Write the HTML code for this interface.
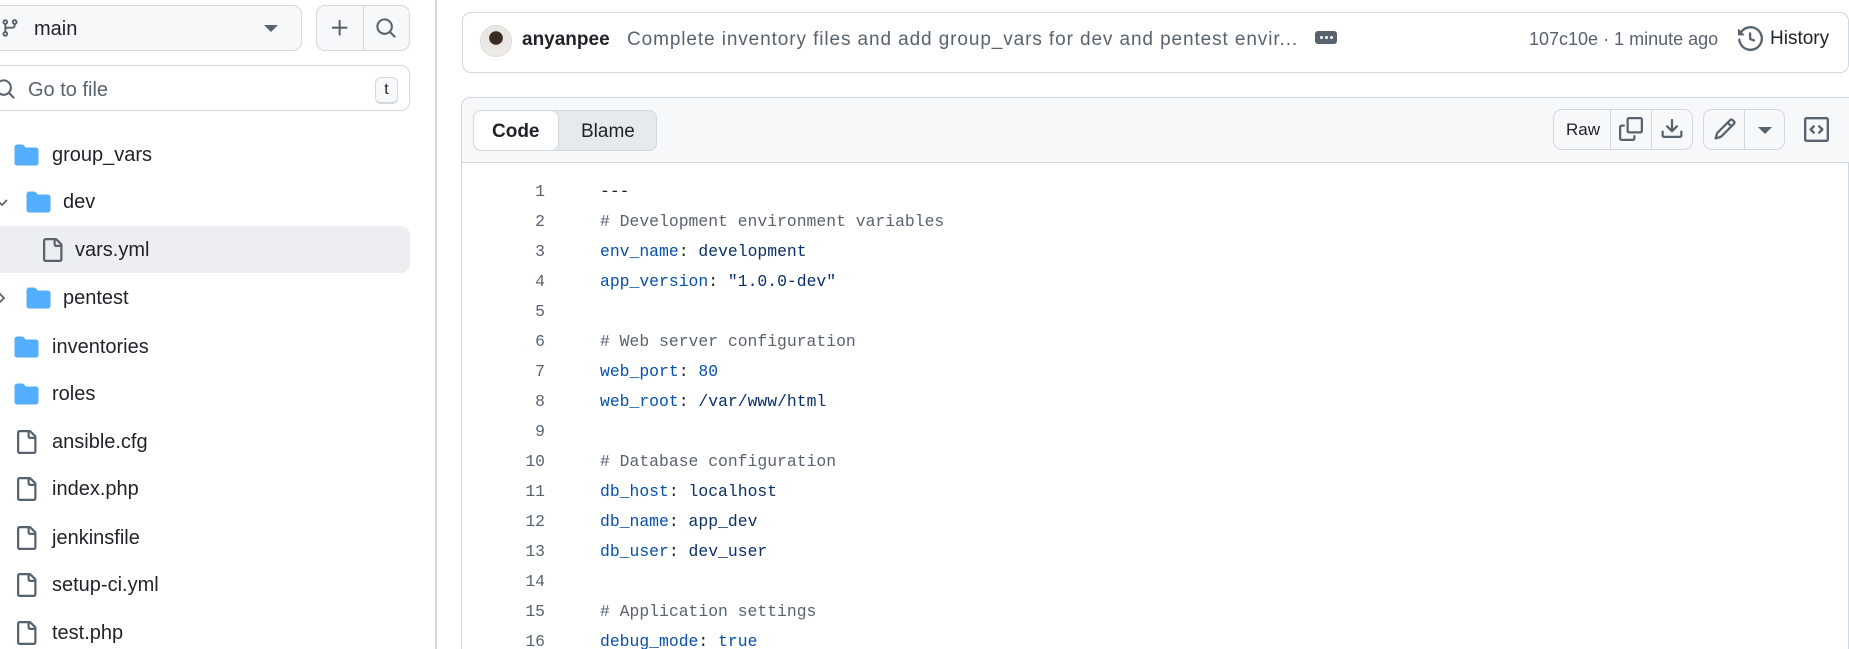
<!DOCTYPE html>
<html><head><meta charset="utf-8">
<style>
*{box-sizing:border-box;margin:0;padding:0}
html{width:1849px;height:649px;overflow:hidden}
body{width:1849px;height:649px;overflow:hidden;background:#fff;font-family:"Liberation Sans",sans-serif;color:#1f2328;position:relative}
.a{position:absolute}
.btn{position:absolute;border:1px solid #d1d9e0;border-radius:9px;background:#f6f8fa}
.ln{position:absolute;width:60px;left:485px;text-align:right;font-family:"Liberation Mono",monospace;font-size:16.4px;color:#59636e}
.cd{position:absolute;left:600px;font-family:"Liberation Mono",monospace;font-size:16.4px;color:#1f2328;white-space:pre}
.k{color:#0550ae}.v{color:#0a3069}.c{color:#59636e}
.t{position:absolute;font-size:20px}
</style></head><body>

<div class="btn" style="left:-10px;top:5px;width:312px;height:46px"></div>
<svg class="a" style="left:0;top:17px" width="20" height="22" viewBox="0 0 16 16"><path fill="#59636e" d="M9.5 3.25a2.25 2.25 0 1 1 3 2.122V6A2.5 2.5 0 0 1 10 8.5H6a1 1 0 0 0-1 1v1.128a2.251 2.251 0 1 1-1.5 0V5.372a2.25 2.25 0 1 1 1.5 0v1.836A2.5 2.5 0 0 1 6 7h4a1 1 0 0 0 1-1v-.628A2.25 2.25 0 0 1 9.5 3.25Zm-6 0a.75.75 0 1 0 1.5 0 .75.75 0 0 0-1.5 0Zm8.25-.75a.75.75 0 1 0 0 1.5.75.75 0 0 0 0-1.5ZM4.25 12a.75.75 0 1 0 0 1.5.75.75 0 0 0 0-1.5Z"/></svg>
<div class="t" style="left:34px;top:18px">main</div>
<svg class="a" style="left:264px;top:25px" width="14" height="8"><path d="M0 0h14L7 7z" fill="#59636e"/></svg>
<div class="btn" style="left:316px;top:5px;width:94px;height:46px"></div>
<div class="a" style="left:363px;top:6px;width:1px;height:44px;background:#d1d9e0"></div>
<svg class="a" style="left:329px;top:17px" width="22" height="22" viewBox="0 0 16 16"><path fill="#59636e" d="M7.75 2a.75.75 0 0 1 .75.75V7h4.25a.75.75 0 0 1 0 1.5H8.5v4.25a.75.75 0 0 1-1.5 0V8.5H2.75a.75.75 0 0 1 0-1.5H7V2.75A.75.75 0 0 1 7.75 2Z"/></svg>
<svg class="a" style="left:375px;top:17px" width="22" height="22" viewBox="0 0 16 16"><path fill="#59636e" d="M10.68 11.74a6 6 0 0 1-7.922-8.982 6 6 0 0 1 8.982 7.922l3.04 3.04a.749.749 0 0 1-.326 1.275.749.749 0 0 1-.734-.215ZM11.5 7a4.499 4.499 0 1 0-8.997 0A4.499 4.499 0 0 0 11.5 7Z"/></svg>

<div class="a" style="left:-10px;top:65px;width:420px;height:46px;border:1px solid #d1d9e0;border-radius:9px"></div>
<svg class="a" style="left:-6px;top:78px" width="22" height="22" viewBox="0 0 16 16"><path fill="#59636e" d="M10.68 11.74a6 6 0 0 1-7.922-8.982 6 6 0 0 1 8.982 7.922l3.04 3.04a.749.749 0 0 1-.326 1.275.749.749 0 0 1-.734-.215ZM11.5 7a4.499 4.499 0 1 0-8.997 0A4.499 4.499 0 0 0 11.5 7Z"/></svg>
<div class="t" style="left:28px;top:79px;color:#59636e">Go to file</div>
<div class="a" style="left:375px;top:77px;width:23px;height:27px;border:1px solid #d1d9e0;border-bottom-width:2px;border-radius:6px;font-size:16px;text-align:center;line-height:23px;background:#f6f8fa">t</div>

<div class="a" style="left:0;top:226px;width:410px;height:47px;background:#eceef1;border-radius:0 9px 9px 0"></div>

<svg width="0" height="0" style="position:absolute"><defs>
<symbol id="fold" viewBox="0 0 16 16"><path fill="#54aeff" d="M1.75 1A1.75 1.75 0 0 0 0 2.75v10.5C0 14.216.784 15 1.75 15h12.5A1.75 1.75 0 0 0 16 13.25v-8.5A1.75 1.75 0 0 0 14.25 3H7.5a.25.25 0 0 1-.2-.1l-.9-1.2C6.07 1.26 5.55 1 5 1H1.75Z"/></symbol>
<symbol id="file" viewBox="0 0 16 16"><path fill="#59636e" d="M2 1.75C2 .784 2.784 0 3.75 0h6.586c.464 0 .909.184 1.237.513l2.914 2.914c.329.328.513.773.513 1.237v9.586A1.75 1.75 0 0 1 13.25 16h-9.5A1.75 1.75 0 0 1 2 14.25Zm1.75-.25a.25.25 0 0 0-.25.25v12.5c0 .138.112.25.25.25h9.5a.25.25 0 0 0 .25-.25V6h-2.75A1.75 1.75 0 0 1 9 4.25V1.5Zm6.75.062V4.25c0 .138.112.25.25.25h2.688l-.011-.013-2.914-2.914-.013-.011Z"/></symbol>
</defs></svg>

<svg class="a" style="left:14px;top:143px" width="25" height="24"><use href="#fold"/></svg>
<div class="t" style="left:52px;top:144px">group_vars</div>
<svg class="a" style="left:-4px;top:196px" width="12" height="12" viewBox="0 0 12 12"><path d="M1 4l5 5 5-5" stroke="#59636e" stroke-width="1.8" fill="none"/></svg>
<svg class="a" style="left:26px;top:190px" width="25" height="24"><use href="#fold"/></svg>
<div class="t" style="left:63px;top:191px">dev</div>
<svg class="a" style="left:40px;top:238px" width="24" height="24"><use href="#file"/></svg>
<div class="t" style="left:75px;top:239px">vars.yml</div>
<svg class="a" style="left:-4px;top:292px" width="12" height="12" viewBox="0 0 12 12"><path d="M3 1l5 5-5 5" stroke="#59636e" stroke-width="1.8" fill="none"/></svg>
<svg class="a" style="left:26px;top:286px" width="25" height="24"><use href="#fold"/></svg>
<div class="t" style="left:63px;top:287px">pentest</div>
<svg class="a" style="left:14px;top:335px" width="25" height="24"><use href="#fold"/></svg>
<div class="t" style="left:52px;top:336px">inventories</div>
<svg class="a" style="left:14px;top:382px" width="25" height="24"><use href="#fold"/></svg>
<div class="t" style="left:52px;top:383px">roles</div>
<svg class="a" style="left:14px;top:430px" width="24" height="24"><use href="#file"/></svg>
<div class="t" style="left:52px;top:431px">ansible.cfg</div>
<svg class="a" style="left:14px;top:477px" width="24" height="24"><use href="#file"/></svg>
<div class="t" style="left:52px;top:478px">index.php</div>
<svg class="a" style="left:14px;top:526px" width="24" height="24"><use href="#file"/></svg>
<div class="t" style="left:52px;top:527px">jenkinsfile</div>
<svg class="a" style="left:14px;top:573px" width="24" height="24"><use href="#file"/></svg>
<div class="t" style="left:52px;top:574px">setup-ci.yml</div>
<svg class="a" style="left:14px;top:621px" width="24" height="24"><use href="#file"/></svg>
<div class="t" style="left:52px;top:622px">test.php</div>

<div class="a" style="left:435px;top:0;width:2px;height:649px;background:#d1d9e0"></div>

<div class="a" style="left:462px;top:12px;width:1387px;height:61px;border:1px solid #d1d9e0;border-radius:9px"></div>
<div class="a" style="left:480px;top:25px;width:32px;height:32px;border-radius:50%;background:radial-gradient(circle at 50% 40%,#3a2a22 0 28%,#e8e4e0 30%,#f2f0ee 100%);border:1px solid #ddd"></div>
<div class="a" style="left:522px;top:29px;font-size:19px;font-weight:bold">anyanpee</div>
<div class="a" style="left:627px;top:29px;font-size:19px;color:#59636e;white-space:nowrap;letter-spacing:0.9px">Complete inventory files and add group_vars for dev and pentest envir...</div>
<div class="a" style="left:1315px;top:31px;width:22px;height:13px;background:#59636e;border-radius:3px"></div>
<div class="a" style="left:1320px;top:36px;width:3px;height:3px;background:#fff;border-radius:50%"></div>
<div class="a" style="left:1325px;top:36px;width:3px;height:3px;background:#fff;border-radius:50%"></div>
<div class="a" style="left:1330px;top:36px;width:3px;height:3px;background:#fff;border-radius:50%"></div>
<div class="a" style="left:1529px;top:29px;font-size:18px;color:#59636e;white-space:nowrap">107c10e · 1 minute ago</div>
<svg class="a" style="left:1738px;top:26px" width="25" height="25" viewBox="0 0 16 16"><path fill="#59636e" d="m.427 1.927 1.215 1.215a8.002 8.002 0 1 1-1.6 5.685.75.75 0 1 1 1.493-.154 6.5 6.5 0 1 0 1.18-4.458l1.358 1.358A.25.25 0 0 1 3.896 6H.25A.25.25 0 0 1 0 5.75V2.104a.25.25 0 0 1 .427-.177ZM7.75 4a.75.75 0 0 1 .75.75v2.992l2.028.812a.75.75 0 0 1-.557 1.392l-2.5-1A.751.751 0 0 1 7 8.25v-3.5A.75.75 0 0 1 7.75 4Z"/></svg>
<div class="a" style="left:1770px;top:28px;font-size:19px">History</div>

<div class="a" style="left:461px;top:97px;width:1388px;height:552px;border:1px solid #d1d9e0;border-bottom:none;border-radius:9px 0 0 0"></div>
<div class="a" style="left:462px;top:98px;width:1387px;height:65px;background:#f6f8fa;border-bottom:1px solid #d1d9e0;border-radius:9px 0 0 0"></div>
<div class="a" style="left:473px;top:110px;width:184px;height:41px;background:#e6eaef;border:1px solid #d1d9e0;border-radius:8px"></div>
<div class="a" style="left:473px;top:110px;width:86px;height:41px;background:#fff;border:1px solid #d1d9e0;border-radius:8px"></div>
<div class="a" style="left:492px;top:121px;font-size:19px;font-weight:bold">Code</div>
<div class="a" style="left:581px;top:121px;font-size:19px">Blame</div>

<div class="btn" style="left:1553px;top:109px;width:140px;height:41px"></div>
<div class="a" style="left:1610px;top:110px;width:1px;height:39px;background:#d1d9e0"></div>
<div class="a" style="left:1651px;top:110px;width:1px;height:39px;background:#d1d9e0"></div>
<div class="a" style="left:1566px;top:120px;font-size:17px">Raw</div>
<svg class="a" style="left:1619px;top:117px" width="24" height="24" viewBox="0 0 16 16"><path fill="#59636e" d="M0 6.75C0 5.784.784 5 1.75 5h1.5a.75.75 0 0 1 0 1.5h-1.5a.25.25 0 0 0-.25.25v7.5c0 .138.112.25.25.25h7.5a.25.25 0 0 0 .25-.25v-1.5a.75.75 0 0 1 1.5 0v1.5A1.75 1.75 0 0 1 9.25 16h-7.5A1.75 1.75 0 0 1 0 14.25Z"/><path fill="#59636e" d="M5 1.75C5 .784 5.784 0 6.75 0h7.5C15.216 0 16 .784 16 1.75v7.5A1.75 1.75 0 0 1 14.25 11h-7.5A1.75 1.75 0 0 1 5 9.25Zm1.75-.25a.25.25 0 0 0-.25.25v7.5c0 .138.112.25.25.25h7.5a.25.25 0 0 0 .25-.25v-7.5a.25.25 0 0 0-.25-.25Z"/></svg>
<svg class="a" style="left:1660px;top:117px" width="24" height="24" viewBox="0 0 16 16"><path fill="#59636e" d="M2.75 14A1.75 1.75 0 0 1 1 12.25v-2.5a.75.75 0 0 1 1.5 0v2.5c0 .138.112.25.25.25h10.5a.25.25 0 0 0 .25-.25v-2.5a.75.75 0 0 1 1.5 0v2.5A1.75 1.75 0 0 1 13.25 14Z"/><path fill="#59636e" d="M7.25 7.689V2a.75.75 0 0 1 1.5 0v5.689l1.97-1.969a.749.749 0 1 1 1.06 1.06l-3.25 3.25a.749.749 0 0 1-1.06 0L4.22 6.78a.749.749 0 1 1 1.06-1.06l1.97 1.969Z"/></svg>

<div class="btn" style="left:1703px;top:109px;width:82px;height:41px"></div>
<div class="a" style="left:1744px;top:110px;width:1px;height:39px;background:#d1d9e0"></div>
<svg class="a" style="left:1713px;top:117px" width="24" height="24" viewBox="0 0 16 16"><path fill="#59636e" d="M11.013 1.427a1.75 1.75 0 0 1 2.474 0l1.086 1.086a1.75 1.75 0 0 1 0 2.474l-8.61 8.61c-.21.21-.47.364-.756.445l-3.251.93a.75.75 0 0 1-.927-.928l.929-3.25c.081-.286.235-.547.445-.758l8.61-8.61Zm.176 4.823L9.75 4.81l-6.286 6.287a.253.253 0 0 0-.064.108l-.558 1.953 1.953-.558a.253.253 0 0 0 .108-.064Zm1.238-3.763a.25.25 0 0 0-.354 0L10.811 3.75l1.439 1.44 1.263-1.263a.25.25 0 0 0 0-.354Z"/></svg>
<svg class="a" style="left:1758px;top:127px" width="14" height="8"><path d="M0 0h14L7 7z" fill="#59636e"/></svg>
<svg class="a" style="left:1804px;top:117px" width="25" height="25" viewBox="0 0 16 16"><path fill="#59636e" d="M0 1.75C0 .784.784 0 1.75 0h12.5C15.216 0 16 .784 16 1.75v12.5A1.75 1.75 0 0 1 14.25 16H1.75A1.75 1.75 0 0 1 0 14.25Zm1.75-.25a.25.25 0 0 0-.25.25v12.5c0 .138.112.25.25.25h12.5a.25.25 0 0 0 .25-.25V1.75a.25.25 0 0 0-.25-.25Zm7.47 3.97a.75.75 0 0 1 1.06 0l2 2a.75.75 0 0 1 0 1.06l-2 2a.749.749 0 0 1-1.275-.326.749.749 0 0 1 .215-.734L10.69 8 9.22 6.53a.75.75 0 0 1 0-1.06ZM6.78 6.53 5.31 8l1.47 1.47a.749.749 0 0 1-.326 1.275.749.749 0 0 1-.734-.215l-2-2a.75.75 0 0 1 0-1.06l2-2a.751.751 0 0 1 1.042.018.751.751 0 0 1 .018 1.042Z"/></svg>

<div class="ln" style="top:182px">1</div><div class="cd" style="top:182px">---</div>
<div class="ln" style="top:212px">2</div><div class="cd c" style="top:212px"># Development environment variables</div>
<div class="ln" style="top:242px">3</div><div class="cd" style="top:242px"><span class="k">env_name</span>: <span class="v">development</span></div>
<div class="ln" style="top:272px">4</div><div class="cd" style="top:272px"><span class="k">app_version</span>: <span class="v">"1.0.0-dev"</span></div>
<div class="ln" style="top:302px">5</div>
<div class="ln" style="top:332px">6</div><div class="cd c" style="top:332px"># Web server configuration</div>
<div class="ln" style="top:362px">7</div><div class="cd" style="top:362px"><span class="k">web_port</span>: <span class="k">80</span></div>
<div class="ln" style="top:392px">8</div><div class="cd" style="top:392px"><span class="k">web_root</span>: <span class="v">/var/www/html</span></div>
<div class="ln" style="top:422px">9</div>
<div class="ln" style="top:452px">10</div><div class="cd c" style="top:452px"># Database configuration</div>
<div class="ln" style="top:482px">11</div><div class="cd" style="top:482px"><span class="k">db_host</span>: <span class="v">localhost</span></div>
<div class="ln" style="top:512px">12</div><div class="cd" style="top:512px"><span class="k">db_name</span>: <span class="v">app_dev</span></div>
<div class="ln" style="top:542px">13</div><div class="cd" style="top:542px"><span class="k">db_user</span>: <span class="v">dev_user</span></div>
<div class="ln" style="top:572px">14</div>
<div class="ln" style="top:602px">15</div><div class="cd c" style="top:602px"># Application settings</div>
<div class="ln" style="top:632px">16</div><div class="cd" style="top:632px"><span class="k">debug_mode</span>: <span class="k">true</span></div>

</body></html>
